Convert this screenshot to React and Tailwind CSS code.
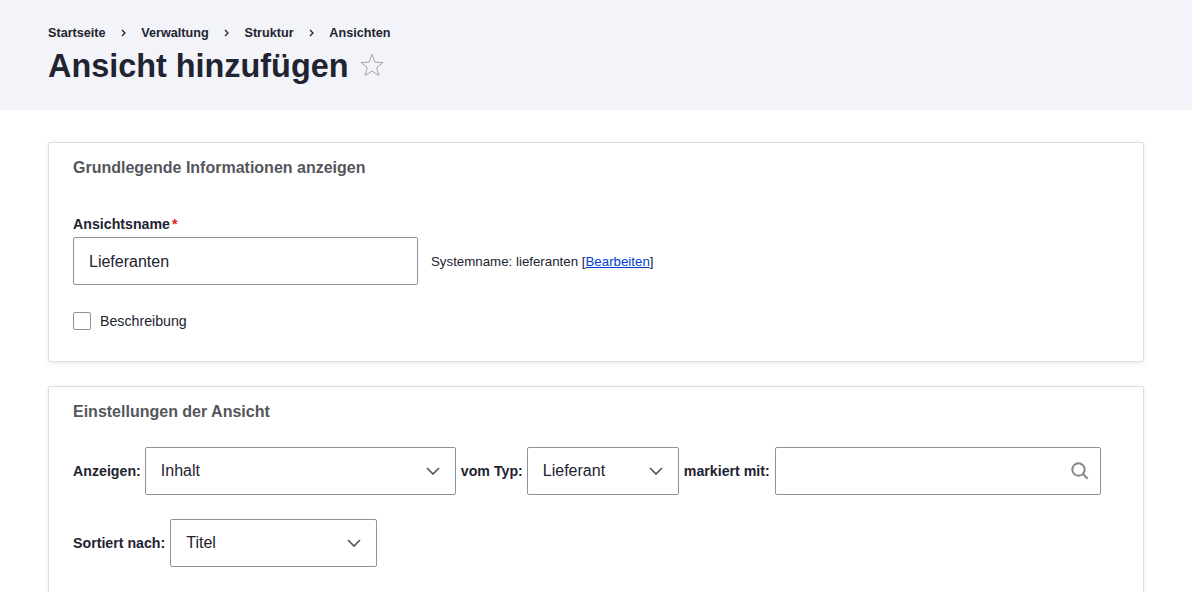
// Drupal Claro "Ansicht hinzufügen" page
const crumbs = ['Startseite', 'Verwaltung', 'Struktur', 'Ansichten']

function Crumbs() {
    return (
        <ol className="flex items-center text-[12.64px] leading-4 font-bold text-[#222330]">
            {crumbs.map((c, i) => (
                <li key={c} className="flex items-center">
                    {i > 0 && (
                        <svg width="5" height="8" viewBox="0 0 5 8" className="mx-[15.4px]">
                            <path d="M1 1l3 3-3 3" fill="none" stroke="#222330" strokeWidth="1.3" />
                        </svg>
                    )}
                    <a>{c}</a>
                </li>
            ))}
        </ol>
    )
}

function Chevron() {
    return (
        <svg width="14" height="8" viewBox="0 0 14 8">
            <path d="M1 1l6 6 6-6" fill="none" stroke="#55565b" strokeWidth="1.7" />
        </svg>
    )
}

function Select({ value, width }) {
    return (
        <div className={`${width} h-12 shrink-0 flex items-center justify-between pl-[15px] pr-[15px] border border-[#8e929c] rounded-[2px] bg-white text-base font-normal text-[#222330]`}>
            <span>{value}</span>
            <Chevron />
        </div>
    )
}

function Card({ title, children, className }) {
    return (
        <section className={`border border-[#dedfe4] rounded-[2px] bg-white shadow-[0_1px_4px_rgba(34,35,48,0.1)] px-6 ${className}`}>
            <h2 className="pt-[16px] text-base leading-[18px] font-bold text-[#55565b]">{title}</h2>
            {children}
        </section>
    )
}

export default function App() {
    return (
        <div className="h-[592px] overflow-hidden bg-white font-['Liberation_Sans',Arial,sans-serif] text-[#222330]">
            {/* Header */}
            <header className="h-[110px] bg-[#f3f4f9] px-12 pt-[25px]">
                <Crumbs />
                <div className="flex items-center mt-[5px]">
                    <h1 className="text-[32.4px] leading-[40px] font-bold">Ansicht hinzufügen</h1>
                    <svg width="24" height="24" viewBox="0 0 24 24" className="ml-3 mt-[-2px]">
                        <path d="M12 1.5l2.9 7.6 8.1.4-6.3 5.1 2.1 7.9L12 18.1l-6.8 4.4 2.1-7.9L1 9.5l8.1-.4z" fill="none" stroke="#a3a4ab" strokeWidth="1" />
                    </svg>
                </div>
            </header>

            <main className="px-12 pt-8 flex flex-col gap-6">
                <Card title="Grundlegende Informationen anzeigen" className="h-[220px]">
                    <label className="block mt-[38px] text-[14.2px] leading-[18px] font-bold">
                        Ansichtsname<span className="text-[#dc2323] ml-[2px]">*</span>
                    </label>
                    <div className="flex items-center mt-[4px]">
                        <div className="w-[345px] h-12 flex items-center px-[15px] pt-[1px] border border-[#8e929c] rounded-[2px] text-base">
                            Lieferanten
                        </div>
                        <p className="ml-[13px] mt-[2px] text-[13.3px]">
                            Systemname: lieferanten [<a className="text-[#003ecc] underline">Bearbeiten</a>]
                        </p>
                    </div>
                    <div className="flex items-center mt-[27px]">
                        <span className="w-[18px] h-[18px] border border-[#8e929c] rounded-[2px]" />
                        <span className="ml-[9px] text-[14.2px] leading-[18px]">Beschreibung</span>
                    </div>
                </Card>

                <Card title="Einstellungen der Ansicht" className="h-[300px]">
                    <div className="flex items-center mt-[26px] text-[14.2px] font-bold">
                        <span className="mr-[4px] pt-[1px]">Anzeigen:</span>
                        <Select value="Inhalt" width="w-[311px]" />
                        <span className="ml-[5px] mr-[4px] pt-[1px]">vom Typ:</span>
                        <Select value="Lieferant" width="w-[152px]" />
                        <span className="ml-[5px] mr-[5px] pt-[1px]">markiert mit:</span>
                        <div className="w-[326px] h-12 flex items-center justify-end pr-[11px] border border-[#8e929c] rounded-[2px]">
                            <svg width="18" height="18" viewBox="0 0 18 18">
                                <circle cx="7.5" cy="7.5" r="6.2" fill="none" stroke="#868686" strokeWidth="2" />
                                <path d="M12 12l4.6 4.8" fill="none" stroke="#868686" strokeWidth="2" />
                            </svg>
                        </div>
                    </div>
                    <div className="flex items-center mt-6 text-[14.2px] font-bold">
                        <span className="mr-[5px] pt-[1px]">Sortiert nach:</span>
                        <Select value="Titel" width="w-[207px]" />
                    </div>
                </Card>
            </main>
        </div>
    )
}
